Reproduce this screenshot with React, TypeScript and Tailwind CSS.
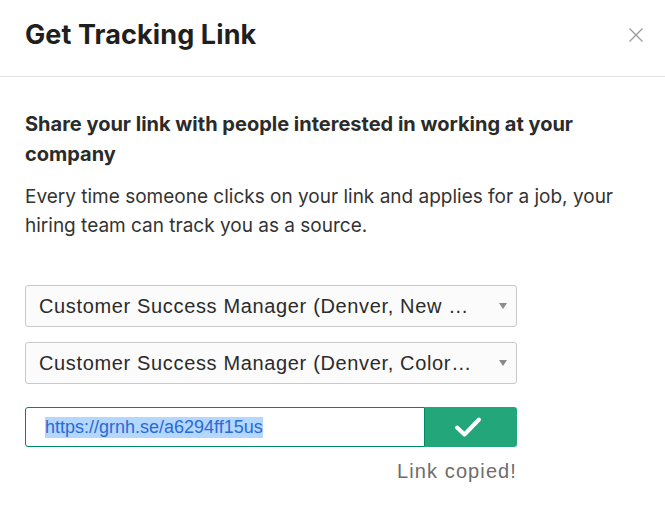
import React from "react";

function Select({ label }: { label: string }) {
  return (
    <div className="flex h-[42px] w-[492px] items-center justify-between rounded-[3px] border border-[#c9c9c9] bg-[#fbfbfb] pl-[13px] pr-[8px]">
      <span className="truncate text-[20px] tracking-[0.65px] text-[#2b2b2b]" style={{ fontFamily: "'Liberation Sans', Arial, sans-serif" }}>
        {label}
      </span>
      <svg width="10" height="8" viewBox="0 0 10 8" className="ml-3 shrink-0">
        <path d="M1 1 L9 1 L5 7 Z" fill="#8a8a8a" />
      </svg>
    </div>
  );
}

export default function App() {
  return (
    <div className="h-[515px] w-[665px] bg-white text-[#222]" style={{ fontFamily: "Inter, 'Liberation Sans', sans-serif" }}>
      <div className="flex h-[77px] items-center justify-between border-b border-[#e3e3e3] pb-[6px] pl-[25px] pr-[21px]">
        <h1 className="text-[27px] font-bold tracking-[0.1px] text-[#1f1f1f]">Get Tracking Link</h1>
        <svg width="16" height="16" viewBox="0 0 16 16">
          <path d="M1.5 1.5 L14.5 14.5 M14.5 1.5 L1.5 14.5" stroke="#9a9a9a" strokeWidth="1.3" />
        </svg>
      </div>
      <div className="px-[25px] pt-[32px]">
        <p className="w-[600px] text-[20px] font-bold leading-[30px] text-[#2b2b2b]">
          Share your link with people interested in working at your company
        </p>
        <p className="mt-[13px] w-[615px] text-[19px] leading-[29px] text-[#333]">
          Every time someone clicks on your link and applies for a job, your hiring team can track you as a source.
        </p>
        <div className="mt-[45px] flex flex-col gap-[15px]">
          <Select label="Customer Success Manager (Denver, New …" />
          <Select label="Customer Success Manager (Denver, Color…" />
        </div>
        <div className="mt-[23px] flex w-[492px]">
          <div className="flex h-[40px] w-[400px] items-center rounded-l-[3px] border border-[#008a62] bg-white pl-[19px]">
            <span className="bg-[#b3d7ff] text-[18px] leading-[21px] text-[#2a6ad4]" style={{ fontFamily: "'Liberation Sans', Arial, sans-serif" }}>
              https://grnh.se/a6294ff15us
            </span>
          </div>
          <button className="flex h-[40px] flex-1 items-center justify-center rounded-r-[3px] bg-[#24a67b] pr-[6px]">
            <svg width="28" height="22" viewBox="0 0 28 22">
              <path d="M3 11.5 L10.5 18.5 L25 3.5" stroke="white" strokeWidth="4" fill="none" strokeLinecap="round" strokeLinejoin="round" />
            </svg>
          </button>
        </div>
        <div className="mt-[12px] w-[492px] text-right text-[20px] leading-[24px] tracking-[1.1px] text-[#6d6d6d]" style={{ fontFamily: "'Liberation Sans', sans-serif" }}>
          Link copied!
        </div>
      </div>
    </div>
  );
}
